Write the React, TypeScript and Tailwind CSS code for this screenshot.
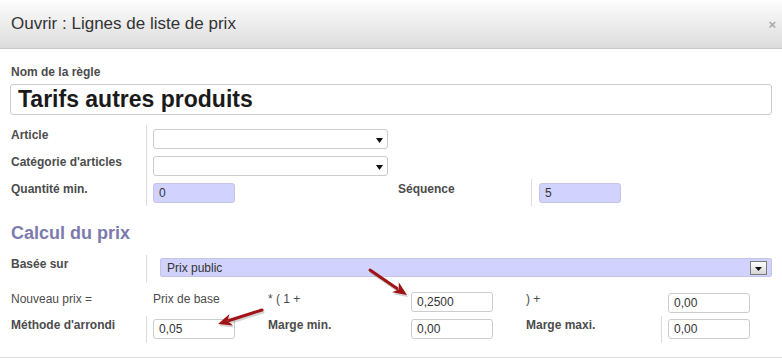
import React from "react";

const Caret = () => (
  <svg width="7" height="5" viewBox="0 0 7 5" className="shrink-0">
    <path d="M0 0 L7 0 L3.5 5 Z" fill="#111" />
  </svg>
);

const Field = ({ value, lavender }: { value: string; lavender?: boolean }) => (
  <div
    className={`w-[82px] h-[20px] border rounded-[3px] px-[5px] leading-[18px] text-[12px] text-[#333] ${
      lavender ? "bg-[#d2d2ff] border-[#c4c4e6]" : "bg-white border-[#cccccc]"
    }`}
  >
    {value}
  </div>
);

const SelectBox = () => (
  <div className="w-[235px] h-[20px] border border-[#cccccc] rounded-[3px] bg-white flex items-center justify-end pr-[4px] pt-[2px]">
    <Caret />
  </div>
);

const Label = ({ children }: { children: React.ReactNode }) => (
  <div className="pl-[1px] pt-[3px] leading-[14px] font-bold text-[#4c4c4c]">{children}</div>
);

export default function App() {
  return (
    <div className="relative w-[782px] h-[359px] overflow-hidden bg-white font-['Liberation_Sans',Arial,sans-serif] text-[12px] text-[#4c4c4c]">
      {/* Header */}
      <div className="h-[49px] flex items-center justify-between pl-[11px] pr-[6px] border-b border-[#c6c6c6] bg-gradient-to-b from-[#fdfdfd] to-[#dcdcdc]">
        <h3 className="text-[17px] leading-[20px] text-[#333]">Ouvrir : Lignes de liste de prix</h3>
        <span className="text-[13px] font-bold text-[#aaaaaa] leading-none">×</span>
      </div>

      {/* Body */}
      <div className="h-[309px] px-[10px] pt-[16px] border-b border-[#dddddd]">
        <div className="pl-[1px] leading-[14px] font-bold text-[#4c4c4c]">Nom de la règle</div>
        <div className="mt-[5px] h-[31px] border border-[#cccccc] rounded-[3px] px-[7px] text-[23px] leading-[29px] font-bold text-[#1a1a1a]">
          Tarifs autres produits
        </div>

        {/* Article / category / qty */}
        <div className="mt-[10px] grid grid-cols-[136px_252px_133px_1fr]">
          <Label>Article</Label>
          <div className="col-span-3 border-l border-[#dddddd] pl-[6px] pt-[4px] pb-[3px]">
            <SelectBox />
          </div>

          <Label>Catégorie d'articles</Label>
          <div className="col-span-3 border-l border-[#dddddd] pl-[6px] pt-[4px] pb-[3px]">
            <SelectBox />
          </div>

          <Label>Quantité min.</Label>
          <div className="border-l border-[#dddddd] pl-[6px] pt-[4px] pb-[3px]">
            <Field value="0" lavender />
          </div>
          <div className="pt-[3px] leading-[14px] font-bold">Séquence</div>
          <div className="border-l border-[#dddddd] pl-[7px] pt-[4px] pb-[3px]">
            <Field value="5" lavender />
          </div>
        </div>

        <div className="mt-[16px] pl-[1px] text-[18px] leading-[22px] font-bold text-[#7c7bad]">Calcul du prix</div>

        {/* Price computation */}
        <div className="mt-[11px] grid grid-cols-[136px_122px_136px_122px_135px_1fr]">
          <div className="pl-[1px] pt-[2px] leading-[14px] font-bold">Basée sur</div>
          <div className="col-span-5 border-l border-[#dddddd] pl-[13px] pt-[3px] pb-[5px]">
            <div className="h-[19px] bg-[#d2d2ff] border border-[#c4c4e6] rounded-[2px] flex items-center justify-between pl-[6px] pr-[4px]">
              <span className="text-[12px] text-[#333] leading-[14px] pt-[1px]">Prix public</span>
              <div className="w-[17px] h-[14px] border border-[#7a7a7a] bg-gradient-to-b from-white to-[#d6d6d6] flex items-end justify-center pb-[3px]">
                <svg width="7" height="4" viewBox="0 0 7 4">
                  <path d="M0 0 L7 0 L3.5 4 Z" fill="#111" />
                </svg>
              </div>
            </div>
          </div>

          <div className="mt-[6px] pl-[1px] pt-[4px] leading-[14px]">Nouveau prix =</div>
          <div className="mt-[6px] pl-[7px] pt-[4px] leading-[14px]">Prix de base</div>
          <div className="mt-[6px] pt-[4px] leading-[14px]">* ( 1 +</div>
          <div className="mt-[6px] pl-[7px] pt-[4px] pb-[3px]">
            <Field value="0,2500" />
          </div>
          <div className="mt-[6px] pt-[4px] leading-[14px]">) +</div>
          <div className="mt-[6px] pl-[7px] pt-[5px] pb-[2px]">
            <Field value="0,00" />
          </div>

          <div className="mt-[1px] pl-[1px] pt-[2px] leading-[14px] font-bold">Méthode d'arrondi</div>
          <div className="mt-[1px] border-l border-[#dddddd] pl-[6px] pt-[3px] pb-[4px]">
            <Field value="0,05" />
          </div>
          <div className="mt-[1px] pt-[2px] leading-[14px] font-bold">Marge min.</div>
          <div className="mt-[1px] pl-[7px] pt-[3px] pb-[4px]">
            <Field value="0,00" />
          </div>
          <div className="mt-[1px] pt-[2px] leading-[14px] font-bold">Marge maxi.</div>
          <div className="mt-[1px] border-l border-[#dddddd] pl-[6px] pt-[3px] pb-[4px]">
            <Field value="0,00" />
          </div>
        </div>
      </div>

      {/* Annotation arrows drawn over the form */}
      <svg className="absolute inset-0 pointer-events-none" width="782" height="359" viewBox="0 0 782 359">
        <g opacity="0.25" transform="translate(1 2)">
          <line x1="370" y1="270" x2="397" y2="288.5" stroke="#555" strokeWidth="3" strokeLinecap="round" />
          <polygon points="407,295 392.1,292.2 398.7,289.4 398.8,282.2" fill="#555" />
          <line x1="262" y1="310" x2="229" y2="320.5" stroke="#555" strokeWidth="3" strokeLinecap="round" />
          <polygon points="218,324 229.5,314.1 227.5,321 233.1,325.5" fill="#555" />
        </g>
        <line x1="370" y1="270" x2="397" y2="288.5" stroke="#a01418" strokeWidth="3" strokeLinecap="round" />
        <polygon points="407,295 392.1,292.2 398.7,289.4 398.8,282.2" fill="#a01418" />
        <line x1="262" y1="310" x2="229" y2="320.5" stroke="#a01418" strokeWidth="3" strokeLinecap="round" />
        <polygon points="218,324 229.5,314.1 227.5,321 233.1,325.5" fill="#a01418" />
      </svg>
    </div>
  );
}
